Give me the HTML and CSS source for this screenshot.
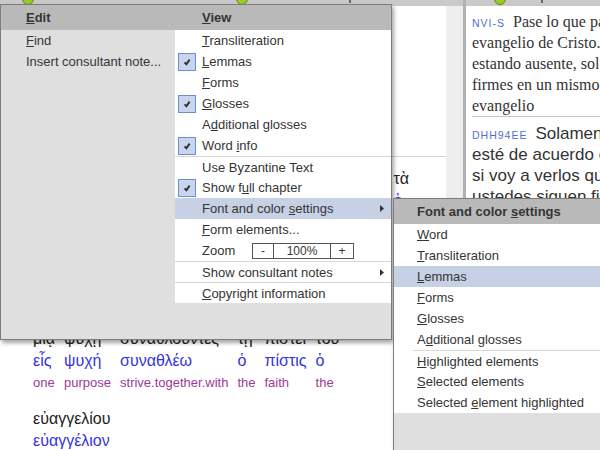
FILE: index.html
```html
<!DOCTYPE html>
<html lang="en">
<head>
    <meta charset="UTF-8">
    <title>Interlinear</title>
    <link rel="stylesheet" href="styles.css">
</head>
<body>

    <div class="app">
        <div class="main-pane">
            <div class="toolbar">
                <span class="tool-icon first"></span>
                <span class="tool-icon second"></span>
                <span class="tool-mark"></span>
            </div>
            <div class="pane-body">
                <div class="interlinear">
                    <div class="verse">
                        <div class="chapter-title">Φιλιππησίους 1</div>
                        <div class="line">
                            <div class="word"><span class="form">Χριστῷ</span><span class="lemma">Χριστός</span><span class="gloss">Christ</span></div>
                            <div class="word"><span class="form">Ἰησοῦ</span><span class="lemma">Ἰησοῦς</span><span class="gloss">Jesus</span></div>
                            <div class="word"><span class="form">ἐν</span><span class="lemma">ἐν</span><span class="gloss">in</span></div>
                            <div class="word"><span class="form">ἐμοὶ</span><span class="lemma">ἐγώ</span><span class="gloss">me</span></div>
                        </div>
                    </div>
                    <div class="verse">
                        <div class="line">
                            <div class="word"><span class="form">ἐλθὼν</span><span class="lemma">ἔρχομαι</span><span class="gloss">come</span></div>
                            <div class="word"><span class="form">καὶ</span><span class="lemma">καί</span><span class="gloss">even</span></div>
                            <div class="word"><span class="form">ἰδὼν</span><span class="lemma">ὁράω</span><span class="gloss">see</span></div>
                            <div class="word"><span class="form">ὑμᾶς</span><span class="lemma">σύ</span><span class="gloss">you.all</span></div>
                            <div class="word"><span class="form">εἴτε</span><span class="lemma">εἴτε</span><span class="gloss">either</span></div>
                            <div class="word"><span class="form">ἀπὼν</span><span class="lemma">ἄπειμι</span><span class="gloss">be.absent</span></div>
                            <div class="word"><span class="form">ἀκούω</span><span class="lemma">ἀκούω</span><span class="gloss">hear</span></div>
                            <div class="word"><span class="form">τὰ</span><span class="lemma">ὁ</span><span class="gloss">the</span></div>
                        </div>
                        <div class="line">
                            <div class="word"><span class="form">περὶ</span><span class="lemma">περί</span><span class="gloss">about</span></div>
                            <div class="word"><span class="form">ὑμῶν</span><span class="lemma">σύ</span><span class="gloss">you</span></div>
                            <div class="word"><span class="form">ὅτι</span><span class="lemma">ὅτι</span><span class="gloss">that</span></div>
                            <div class="word"><span class="form">στήκετε</span><span class="lemma">στήκω</span><span class="gloss">stand</span></div>
                            <div class="word"><span class="form">ἐν</span><span class="lemma">ἐν</span><span class="gloss">in</span></div>
                            <div class="word"><span class="form">ἑνὶ</span><span class="lemma">εἷς</span><span class="gloss">one</span></div>
                            <div class="word"><span class="form">πνεύματι</span><span class="lemma">πνεῦμα</span><span class="gloss">spirit</span></div>
                        </div>
                        <div class="line">
                            <div class="word"><span class="form">μιᾷ</span><span class="lemma">εἷς</span><span class="gloss">one</span></div>
                            <div class="word"><span class="form">ψυχῇ</span><span class="lemma">ψυχή</span><span class="gloss">purpose</span></div>
                            <div class="word"><span class="form">συναθλοῦντες</span><span class="lemma">συναθλέω</span><span class="gloss">strive.together.with</span></div>
                            <div class="word"><span class="form">τῇ</span><span class="lemma">ὁ</span><span class="gloss">the</span></div>
                            <div class="word"><span class="form">πίστει</span><span class="lemma">πίστις</span><span class="gloss">faith</span></div>
                            <div class="word"><span class="form">τοῦ</span><span class="lemma">ὁ</span><span class="gloss">the</span></div>
                        </div>
                        <div class="line">
                            <div class="word"><span class="form">εὐαγγελίου</span><span class="lemma">εὐαγγέλιον</span><span class="gloss">good.news</span></div>
                        </div>
                    </div>
                </div>
                <div class="gutter"></div>
            </div>
        </div>

        <div class="divider"></div>

        <div class="side-pane">
            <div class="toolbar">
                <span class="tool-icon side"></span>
                <span class="tool-mark side"></span>
            </div>
            <div class="versions">
                <div class="version nvi">
                    <span class="tag">NVI-S</span>Pase lo que pase, compórtense de una manera digna del<br>
                    evangelio de Cristo. De este modo, ya sea que vaya a verlos o que,<br>
                    estando ausente, solo tenga noticias suyas, sabré que siguen<br>
                    firmes en un mismo propósito, luchando unánimes por la fe del<br>
                    evangelio
                </div>
                <div class="version dhh">
                    <span class="tag">DHH94EE</span>Solamente les pido que vivan de una manera que<br>
                    esté de acuerdo con el evangelio de Cristo. Así,<br>
                    si voy a verlos quiero comprobar, y si no voy,<br>
                    ustedes siguen firmes en un mismo espíritu
                </div>
            </div>
        </div>
    </div>

    <!-- menú principal -->
    <div class="menu main-menu">
        <div class="menu-head">
            <div class="edit-title"><u>E</u>dit</div>
            <div class="view-title"><u>V</u>iew</div>
        </div>
        <div class="menu-body">
            <div class="edit-list">
                <div class="item"><u>F</u>ind</div>
                <div class="item">Insert consultant note...</div>
            </div>
            <div class="view-list">
                <div class="item"><span></span><span><u>T</u>ransliteration</span></div>
                <div class="item"><span class="check"><svg width="10" height="10" viewBox="0 0 10 10"><path d="M2.6 5.4 L4.4 7.3 L7.6 2.6" fill="none" stroke="#2e2e2e" stroke-width="1.9"/></svg></span><span><u>L</u>emmas</span></div>
                <div class="item"><span></span><span><u>F</u>orms</span></div>
                <div class="item"><span class="check"><svg width="10" height="10" viewBox="0 0 10 10"><path d="M2.6 5.4 L4.4 7.3 L7.6 2.6" fill="none" stroke="#2e2e2e" stroke-width="1.9"/></svg></span><span><u>G</u>losses</span></div>
                <div class="item"><span></span><span>A<u>d</u>ditional glosses</span></div>
                <div class="item"><span class="check"><svg width="10" height="10" viewBox="0 0 10 10"><path d="M2.6 5.4 L4.4 7.3 L7.6 2.6" fill="none" stroke="#2e2e2e" stroke-width="1.9"/></svg></span><span>Word <u>i</u>nfo</span></div>
                <div class="item sep"><span></span><span>Use Byzantine Text</span></div>
                <div class="item"><span class="check"><svg width="10" height="10" viewBox="0 0 10 10"><path d="M2.6 5.4 L4.4 7.3 L7.6 2.6" fill="none" stroke="#2e2e2e" stroke-width="1.9"/></svg></span><span>Show f<u>u</u>ll chapter</span></div>
                <div class="item active"><span></span><span>Font and color <u>s</u>ettings</span><svg class="arrow" width="4" height="7" viewBox="0 0 4 7"><polygon points="0,0 4,3.5 0,7" fill="#333"/></svg></div>
                <div class="item"><span></span><span><u>F</u>orm elements...</span></div>
                <div class="item"><span></span>
                    <span class="zoom-ctl">
                        <span class="zoom-label">Zoom</span>
                        <span class="stepper"><span class="minus">-</span><span class="value">100%</span><span class="plus">+</span></span>
                    </span>
                </div>
                <div class="item sep"><span></span><span>Show consultant notes</span><svg class="arrow" width="4" height="7" viewBox="0 0 4 7"><polygon points="0,0 4,3.5 0,7" fill="#333"/></svg></div>
                <div class="item sep"><span></span><span><u>C</u>opyright information</span></div>
            </div>
        </div>
    </div>

    <!-- submenú -->
    <div class="menu sub-menu">
        <div class="sub-head">Font and color <u>s</u>ettings</div>
        <div class="sub-list">
            <div class="item"><u>W</u>ord</div>
            <div class="item"><u>T</u>ransliteration</div>
            <div class="item active"><u>L</u>emmas</div>
            <div class="item"><u>F</u>orms</div>
            <div class="item"><u>G</u>losses</div>
            <div class="item">A<u>d</u>ditional glosses</div>
            <div class="item sep"><u>H</u>ighlighted elements</div>
            <div class="item"><u>S</u>elected elements</div>
            <div class="item">Selected <u>e</u>lement highlighted</div>
        </div>
    </div>

</body>
</html>
```

FILE: styles.css
```css
html, body {
    margin: 0;
    width: 600px;
    height: 450px;
    overflow: hidden;
}
body {
    position: relative;
    background-color: #fff;
    font-family: "Liberation Sans", "DejaVu Sans", Arial, sans-serif;
    color: #333;
}

.app {
    display: flex;
    height: 450px;
}
.main-pane {
    width: 463px;
    display: flex;
    flex-direction: column;
}
.side-pane {
    flex: 1;
    min-width: 0;
    display: flex;
    flex-direction: column;
    overflow: hidden;
}
.divider {
    width: 3px;
    background-color: #b1b1b1;
}

.toolbar {
    height: 6px;
    flex-shrink: 0;
    background-color: #cacaca;
    display: flex;
    align-items: flex-start;
    overflow: hidden;
}
.tool-icon {
    width: 12px;
    height: 12px;
    margin-top: -7px;
    border-radius: 50%;
    background-color: #9cc92c;
    border: 1px solid #5f8b14;
    box-sizing: border-box;
}
.tool-icon.first { margin-left: 22px; }
.tool-icon.second { margin-left: 202px; }
.tool-icon.side { margin-left: 28px; }
.tool-mark {
    width: 2px;
    height: 3px;
    background-color: #666;
    margin-left: 101px;
}
.tool-mark.side { margin-left: 35px; }

.pane-body {
    flex: 1;
    display: flex;
    min-height: 0;
}
.interlinear {
    flex: 1;
    padding-left: 33px;
    overflow: hidden;
}
.gutter {
    width: 17px;
    background-color: #eeeeee;
}

.chapter-title {
    font-size: 20px;
    line-height: 40px;
    padding: 15px 0;
    color: #222;
}
.verse + .verse {
    border-top: 1px solid #d2d2d2;
    padding-top: 11px;
}
.line {
    display: flex;
    gap: 9px;
    margin-bottom: 14px;
    white-space: nowrap;
}
.word {
    display: flex;
    flex-direction: column;
}
.form {
    font-size: 16px;
    line-height: 22px;
    color: #222;
}
.lemma {
    font-size: 16px;
    line-height: 22px;
    color: #3434dc;
}
.gloss {
    font-size: 13px;
    line-height: 22px;
    color: #9b3a9b;
}

.versions {
    padding-left: 6px;
    white-space: nowrap;
    color: #333;
}
.version.nvi {
    font-family: "Liberation Serif", "DejaVu Serif", serif;
    font-size: 16px;
    line-height: 21px;
    padding-top: 5px;
    border-bottom: 1px solid #c6c6c6;
}
.version.dhh {
    font-size: 17px;
    line-height: 21px;
    padding-top: 6px;
}
.tag {
    font-family: "Liberation Sans", Arial, sans-serif;
    font-size: 10.5px;
    line-height: 1;
    letter-spacing: 1px;
    color: #4d70c8;
    margin-right: 8px;
}

/* menus */
.menu {
    position: absolute;
    background-color: #dfdfdf;
    border: 1px solid #7d7d7d;
    box-shadow: 2px 3px 4px rgba(0, 0, 0, 0.35);
    font-size: 13px;
    color: #353535;
}
.main-menu {
    left: 0;
    top: 4px;
    width: 390px;
    height: 334px;
}
.menu-head {
    display: grid;
    grid-template-columns: 174px 1fr;
    height: 25px;
    line-height: 25px;
    background-color: #b9b9b9;
    font-weight: bold;
}
.edit-title { padding-left: 25px; }
.view-title { padding-left: 27px; }

.menu-body {
    display: grid;
    grid-template-columns: 174px 1fr;
    align-items: start;
}
.item {
    height: 21px;
    line-height: 21px;
    box-sizing: border-box;
    white-space: nowrap;
}
.edit-list .item {
    padding-left: 25px;
}
.view-list {
    background-color: #fff;
}
.view-list .item {
    display: grid;
    grid-template-columns: 27px 1fr auto;
    align-items: center;
    padding-right: 7px;
}
.item.sep {
    border-top: 1px solid #d6d6d6;
}
.item.active {
    background-color: #c6d1e5;
}
.check {
    width: 18px;
    height: 18px;
    margin-left: 3px;
    box-sizing: border-box;
    border: 1px solid #6b8fcc;
    background-color: #c7d6ee;
    display: flex;
    align-items: center;
    justify-content: center;
}
.arrow {
    display: block;
}

.zoom-ctl {
    display: flex;
    align-items: center;
}
.zoom-label {
    width: 50px;
}
.stepper {
    display: flex;
    height: 16px;
    line-height: 14px;
    border: 1px solid #555;
    box-sizing: border-box;
    font-size: 12px;
}
.stepper span {
    text-align: center;
}
.stepper .minus { width: 20px; }
.stepper .value {
    width: 56px;
    border-left: 1px solid #555;
    border-right: 1px solid #555;
}
.stepper .plus { width: 22px; }

.sub-menu {
    left: 393px;
    top: 198px;
    width: 220px;
    height: 260px;
}
.sub-head {
    height: 25px;
    line-height: 25px;
    padding-left: 23px;
    background-color: #b9b9b9;
    font-weight: bold;
}
.sub-list {
    background-color: #fff;
}
.sub-list .item {
    padding-left: 23px;
}
.sub-list .item.sep {
    margin-left: 19px;
    padding-left: 4px;
}
```
